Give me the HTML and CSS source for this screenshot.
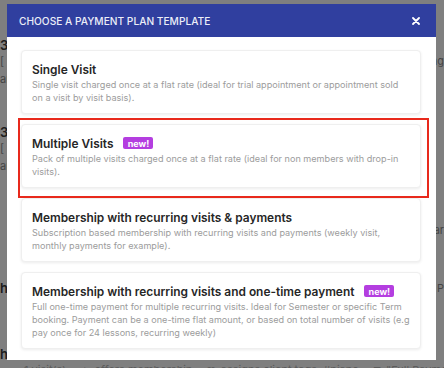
FILE: index.html
```html
<!DOCTYPE html>
<html lang="en">
<head>
<meta charset="utf-8">
<title>Choose a payment plan template</title>
<link rel="stylesheet" href="styles.css">
</head>
<body>
<div class="page">
  <div class="row r1"><span class="strong">30</span></div>
  <div class="row r2"><span class="muted">[</span><span class="muted">ng</span></div>
  <div class="row r3"><span class="muted">an</span></div>
  <div class="row r4"><span class="strong">30</span></div>
  <div class="row r5"><span class="muted">[</span></div>
  <div class="row r6"><span class="muted">an</span></div>
  <div class="row r7"><span class="muted"></span><span class="muted">ar</span></div>
  <div class="row r8"><span class="strong">h</span><span class="muted">o P</span></div>
  <div class="row r9"><span class="strong">h</span></div>
  <div class="row meta">
    <span class="meta-item"><span class="meta-ico">&#9638;</span>1 visit(s)</span>
    <span class="meta-item"><span class="meta-ico">&#9650;</span>offers membership</span>
    <span class="meta-item"><span class="meta-ico">&#9829;</span>assigns client tags: #piano</span>
    <span class="meta-item"><span class="meta-ico">&#9632;</span>"Full Payment - Piano P</span>
  </div>
</div>

<div class="overlay"></div>

<div class="modal" role="dialog">
  <div class="modal-header">
    <h1 class="modal-title">Choose a payment plan template</h1>
    <button class="close" aria-label="Close">
      <svg width="8" height="8" viewBox="0 0 8 8"><path d="M1 1L7 7M7 1L1 7" stroke="#fff" stroke-width="1.8" stroke-linecap="round"/></svg>
    </button>
  </div>
  <div class="modal-body">
    <div class="card">
      <div class="card-title">Single Visit</div>
      <div class="card-desc">Single visit charged once at a flat rate (ideal for trial appointment or appointment sold on a visit by visit basis).</div>
    </div>
    <div class="highlight">
      <div class="card">
        <div class="card-title">Multiple Visits <span class="badge">new!</span></div>
        <div class="card-desc">Pack of multiple visits charged once at a flat rate (ideal for non members with drop-in visits).</div>
      </div>
      <div class="highlight-ring"></div>
    </div>
    <div class="card">
      <div class="card-title">Membership with recurring visits &amp; payments</div>
      <div class="card-desc">Subscription based membership with recurring visits and payments (weekly visit, monthly payments for example).</div>
    </div>
    <div class="card">
      <div class="card-title">Membership with recurring visits and one-time payment <span class="badge">new!</span></div>
      <div class="card-desc">Full one-time payment for multiple recurring visits. Ideal for Semester or specific Term booking. Payment can be a one-time flat amount, or based on total number of visits (e.g pay once for 24 lessons, recurring weekly)</div>
    </div>
  </div>
</div>
</body>
</html>
```
FILE: styles.css
```css
html, body {
  margin: 0;
  padding: 0;
  background: #ffffff;
  font-family: Inter, "Noto Sans", sans-serif;
  overflow: hidden;
  width: 444px;
  height: 368px;
}

.page {
  display: flex;
  flex-direction: column;
  width: 444px;
  height: 368px;
  overflow: hidden;
}

.row {
  display: flex;
  justify-content: space-between;
  align-items: center;
  height: 16px;
  flex-shrink: 0;
  white-space: nowrap;
}

.r1 { margin-top: 37px; }
.r2 { margin-top: 0; }
.r3 { margin-top: 2px; }
.r4 { margin-top: 37px; }
.r5 { margin-top: 0; }
.r6 { margin-top: 2px; }
.r7 { margin-top: 48px; }
.r8 { margin-top: 42px; }
.r9 { margin-top: 50px; }

.strong { font-size: 13px; font-weight: 600; color: #3a3a3a; }
.muted { font-size: 11px; color: #8a8a8a; }

.meta {
  justify-content: flex-start;
  gap: 14px;
  padding-left: 10px;
  height: 16px;
  overflow: hidden;
}
.meta-item { font-size: 11px; color: #b8b8b8; display: flex; align-items: center; gap: 5px; flex-shrink: 0; }
.meta-ico { font-size: 9px; color: #b8b8b8; }

.overlay {
  position: fixed;
  inset: 0;
  background: rgba(0, 0, 0, 0.5);
}

.modal {
  position: absolute;
  left: 7px;
  top: 4px;
  width: 429px;
  background: #ffffff;
  display: flex;
  flex-direction: column;
}

.modal-header {
  height: 33px;
  background: #303f9f;
  display: flex;
  align-items: center;
  justify-content: space-between;
  padding: 0 16px 0 12px;
}

.modal-title {
  margin: 0;
  font-size: 10.2px;
  font-weight: 500;
  text-transform: uppercase;
  color: #eceef8;
}

.close {
  border: 0;
  background: none;
  padding: 0;
  width: 8px;
  height: 8px;
  display: flex;
}

.modal-body {
  padding: 13px 15px 11px 14px;
  display: flex;
  flex-direction: column;
  gap: 10px;
}

.card {
  border: 1px solid #efefef;
  border-radius: 4px;
  box-shadow: 0 1px 3px rgba(0, 0, 0, 0.08);
  padding: 9px 9px 9px 10px;
  background: #fff;
}

.card-title {
  display: flex;
  align-items: center;
  gap: 10px;
  height: 18px;
  font-size: 11.9px;
  font-weight: 600;
  color: #262626;
  white-space: nowrap;
}

.card-desc {
  font-size: 9.1px;
  line-height: 13px;
  color: #9c9c9c;
}

.badge {
  display: inline-flex;
  align-items: center;
  justify-content: center;
  width: 30px;
  height: 12px;
  border-radius: 2px;
  background: #b43ee0;
  color: #fff;
  font-size: 9px;
  font-weight: 700;
}

.highlight {
  position: relative;
}

.highlight-ring {
  position: absolute;
  left: -3px;
  right: -8px;
  top: -6px;
  bottom: -10px;
  border: 2px solid #e8291c;
  pointer-events: none;
}
```
